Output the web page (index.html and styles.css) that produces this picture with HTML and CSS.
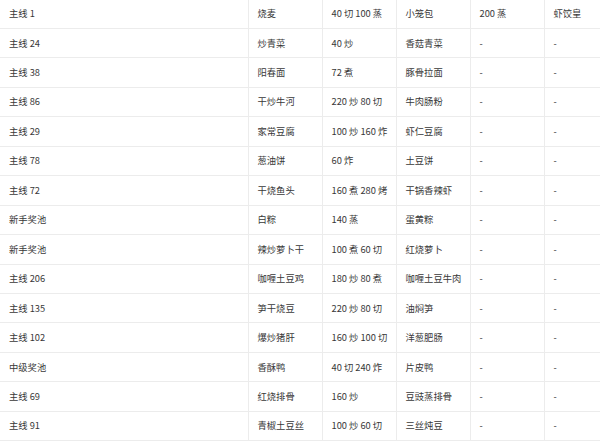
FILE: index.html
```html
<!DOCTYPE html>
<html lang="zh">
<head>
<meta charset="utf-8">
<link rel="stylesheet" href="styles.css">
</head>
<body>
<div class="wrap">
<table class="grid">
<colgroup>
<col class="c-src"><col class="c"><col class="c"><col class="c"><col class="c"><col class="c">
</colgroup>
<tbody>
<tr><td>主线 1</td><td>烧麦</td><td>40 切 100 蒸</td><td>小笼包</td><td>200 蒸</td><td>虾饺皇</td></tr>
<tr><td>主线 24</td><td>炒青菜</td><td>40 炒</td><td>香菇青菜</td><td>-</td><td>-</td></tr>
<tr><td>主线 38</td><td>阳春面</td><td>72 煮</td><td>豚骨拉面</td><td>-</td><td>-</td></tr>
<tr><td>主线 86</td><td>干炒牛河</td><td>220 炒 80 切</td><td>牛肉肠粉</td><td>-</td><td>-</td></tr>
<tr><td>主线 29</td><td>家常豆腐</td><td>100 炒 160 炸</td><td>虾仁豆腐</td><td>-</td><td>-</td></tr>
<tr><td>主线 78</td><td>葱油饼</td><td>60 炸</td><td>土豆饼</td><td>-</td><td>-</td></tr>
<tr><td>主线 72</td><td>干烧鱼头</td><td>160 煮 280 烤</td><td>干锅香辣虾</td><td>-</td><td>-</td></tr>
<tr><td>新手奖池</td><td>白粽</td><td>140 蒸</td><td>蛋黄粽</td><td>-</td><td>-</td></tr>
<tr><td>新手奖池</td><td>辣炒萝卜干</td><td>100 煮 60 切</td><td>红烧萝卜</td><td>-</td><td>-</td></tr>
<tr><td>主线 206</td><td>咖喱土豆鸡</td><td>180 炒 80 煮</td><td>咖喱土豆牛肉</td><td>-</td><td>-</td></tr>
<tr><td>主线 135</td><td>笋干烧豆</td><td>220 炒 80 切</td><td>油焖笋</td><td>-</td><td>-</td></tr>
<tr><td>主线 102</td><td>爆炒猪肝</td><td>160 炒 100 切</td><td>洋葱肥肠</td><td>-</td><td>-</td></tr>
<tr><td>中级奖池</td><td>香酥鸭</td><td>40 切 240 炸</td><td>片皮鸭</td><td>-</td><td>-</td></tr>
<tr><td>主线 69</td><td>红烧排骨</td><td>160 炒</td><td>豆豉蒸排骨</td><td>-</td><td>-</td></tr>
<tr><td>主线 91</td><td>青椒土豆丝</td><td>100 炒 60 切</td><td>三丝炖豆</td><td>-</td><td>-</td></tr>
</tbody>
</table>
</div>
</body>
</html>
```

FILE: styles.css
```css
html, body {
  margin: 0;
  padding: 0;
  background: #fff;
  overflow: hidden;
}
.wrap {
  width: 600px;
  height: 441px;
  overflow: hidden;
}
.grid {
  border-collapse: collapse;
  table-layout: fixed;
  width: 618px;
  margin-top: -1.5px;
  font-family: "Noto Sans CJK SC", "Noto Sans", sans-serif;
  font-size: 9.3px;
  color: #383838;
}
.c-src { width: 248px; }
.c { width: 74px; }
.grid td {
  height: 29.46px;
  box-sizing: border-box;
  padding: 0 9px;
  border: 1px solid #ececec;
  vertical-align: middle;
  white-space: nowrap;
  overflow: hidden;
  line-height: 1;
}
.grid td:first-child {
  border-left: none;
}
```
